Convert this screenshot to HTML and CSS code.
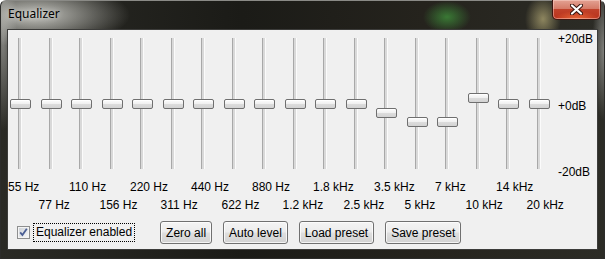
FILE: index.html
```html
<!DOCTYPE html>
<html>
<head>
    <title>Equalizer</title>
    <link rel="stylesheet" href="styles.css">
</head>
<body>
    <div class="window">
        <!-- Title bar -->
        <div class="titlebar">
            <span class="title">Equalizer</span>
            <button class="close-btn" title="Close">
                <svg width="13" height="11" viewBox="0 0 13 11">
                    <path d="M2 1.5 L11 9.5 M11 1.5 L2 9.5" stroke="#3a1610" stroke-width="4.2" stroke-linecap="round" fill="none"/>
                    <path d="M2 1.5 L11 9.5 M11 1.5 L2 9.5" stroke="#ffffff" stroke-width="2.2" stroke-linecap="round" fill="none"/>
                </svg>
            </button>
        </div>

        <div class="client">
            <!-- Band sliders; thumb top = 61 - 3 * gain(dB) -->
            <div class="bands">
                <div class="sliders">
                    <div class="slider"><div class="track"></div><div class="thumb" style="top: 61px"></div></div>
                    <div class="slider"><div class="track"></div><div class="thumb" style="top: 61px"></div></div>
                    <div class="slider"><div class="track"></div><div class="thumb" style="top: 61px"></div></div>
                    <div class="slider"><div class="track"></div><div class="thumb" style="top: 61px"></div></div>
                    <div class="slider"><div class="track"></div><div class="thumb" style="top: 61px"></div></div>
                    <div class="slider"><div class="track"></div><div class="thumb" style="top: 61px"></div></div>
                    <div class="slider"><div class="track"></div><div class="thumb" style="top: 61px"></div></div>
                    <div class="slider"><div class="track"></div><div class="thumb" style="top: 61px"></div></div>
                    <div class="slider"><div class="track"></div><div class="thumb" style="top: 61px"></div></div>
                    <div class="slider"><div class="track"></div><div class="thumb" style="top: 61px"></div></div>
                    <div class="slider"><div class="track"></div><div class="thumb" style="top: 61px"></div></div>
                    <div class="slider"><div class="track"></div><div class="thumb" style="top: 61px"></div></div>
                    <div class="slider"><div class="track"></div><div class="thumb" style="top: 70px"></div></div>
                    <div class="slider"><div class="track"></div><div class="thumb" style="top: 79px"></div></div>
                    <div class="slider"><div class="track"></div><div class="thumb" style="top: 79px"></div></div>
                    <div class="slider"><div class="track"></div><div class="thumb" style="top: 55px"></div></div>
                    <div class="slider"><div class="track"></div><div class="thumb" style="top: 61px"></div></div>
                    <div class="slider"><div class="track"></div><div class="thumb" style="top: 61px"></div></div>
                </div>
                <div class="scale">
                    <span>+20dB</span>
                    <span>+0dB</span>
                    <span>-20dB</span>
                </div>
            </div>

            <!-- Frequency labels, staggered over two rows -->
            <div class="freqs">
                <div class="freq-row">
                    <span>55 Hz</span>
                    <span>110 Hz</span>
                    <span>220 Hz</span>
                    <span>440 Hz</span>
                    <span>880 Hz</span>
                    <span>1.8 kHz</span>
                    <span>3.5 kHz</span>
                    <span>7 kHz</span>
                    <span>14 kHz</span>
                </div>
                <div class="freq-row shifted">
                    <span>77 Hz</span>
                    <span>156 Hz</span>
                    <span>311 Hz</span>
                    <span>622 Hz</span>
                    <span>1.2 kHz</span>
                    <span>2.5 kHz</span>
                    <span>5 kHz</span>
                    <span>10 kHz</span>
                    <span>20 kHz</span>
                </div>
            </div>

            <!-- Bottom controls -->
            <div class="controls">
                <label class="check">
                    <svg class="check-box" width="13" height="13" viewBox="0 0 13 13">
                        <defs>
                            <linearGradient id="cbfill" x1="0" y1="0" x2="1" y2="1">
                                <stop offset="0" stop-color="#cfd3d8"/>
                                <stop offset="1" stop-color="#f6f7f8"/>
                            </linearGradient>
                        </defs>
                        <rect x="0.5" y="0.5" width="12" height="12" fill="#f4f4f4" stroke="#8e8f8f"/>
                        <rect x="2" y="2" width="9" height="9" fill="url(#cbfill)"/>
                        <path d="M3.2 6.4 L5.4 9 L9.8 2.8" stroke="#4a5e94" stroke-width="1.8" fill="none"/>
                    </svg>
                    <span class="check-label">Equalizer enabled</span>
                </label>
                <div class="buttons">
                    <button class="btn">Zero all</button>
                    <button class="btn">Auto level</button>
                    <button class="btn">Load preset</button>
                    <button class="btn">Save preset</button>
                </div>
            </div>
        </div>
    </div>
</body>
</html>
```

FILE: styles.css
```css
body {
    margin: 0;
    width: 605px;
    height: 259px;
    overflow: hidden;
    font-family: "Liberation Sans", Arial, sans-serif;
    font-size: 12px;
    color: #000;
}
.window {
    width: 605px;
    height: 259px;
    box-sizing: border-box;
    display: flex;
    flex-direction: column;
    border-radius: 6px 6px 0 0;
    border: 1px solid #2c2c2a;
    border-top-color: #8a8a86;
    background:
        radial-gradient(ellipse 95px 32px at 34px 14px, rgba(206,206,200,0.95), rgba(206,206,200,0) 100%),
        radial-gradient(ellipse 14px 90px at 2px 40px, rgba(150,150,146,0.8), rgba(150,150,146,0) 100%),
        radial-gradient(ellipse 24px 16px at 446px 16px, rgba(60,130,55,0.9), rgba(60,130,55,0) 100%),
        radial-gradient(ellipse 18px 24px at 542px 18px, rgba(175,165,115,0.75), rgba(175,165,115,0) 100%),
        radial-gradient(ellipse 12px 70px at 603px 50px, rgba(150,150,146,0.8), rgba(150,150,146,0) 100%),
        linear-gradient(90deg, #2a2a25 0%, #1b1b17 40%, #25231d 70%, #2c2c26 100%);
}
.titlebar {
    height: 28px;
    display: flex;
    align-items: flex-start;
    padding: 0 3px 0 7px;
}
.title {
    margin-top: 5px;
    font-family: "Noto Sans", "Open Sans", sans-serif;
    font-size: 12px;
    line-height: 16px;
    color: #000;
    text-shadow: 0 0 6px rgba(255,255,255,0.6);
}
.close-btn {
    margin-left: auto;
    margin-top: -1px;
    width: 49px;
    height: 20px;
    padding: 0;
    display: flex;
    align-items: center;
    justify-content: center;
    border: 1px solid #3e1510;
    border-top: none;
    border-radius: 0 0 5px 5px;
    background:
        radial-gradient(ellipse 22px 8px at 50% 100%, rgba(240,110,60,0.9), rgba(240,110,60,0) 100%),
        linear-gradient(#e3a293 0%, #d57b68 45%, #c0412a 50%, #b9321c 100%);
    box-shadow: inset 0 0 0 1px rgba(255,220,210,0.45);
}
.client {
    flex: 1;
    margin: 0 6px 8px 6px;
    border: 1px solid #3c3c3a;
    background: #f0f0f0;
    display: flex;
    flex-direction: column;
}
.bands {
    height: 150px;
    display: flex;
}
.sliders {
    display: grid;
    grid-template-columns: repeat(18, 30.5px);
    padding-top: 8px;
}
.slider {
    position: relative;
    height: 131px;
}
.track {
    margin-left: 10px;
    width: 2px;
    height: 100%;
    background: #d9d9d9;
    border-left: 1px solid #a8a8a8;
    border-right: 1px solid #fbfbfb;
}
.thumb {
    position: absolute;
    left: 2px;
    width: 21px;
    height: 10px;
    box-sizing: border-box;
    border: 1px solid #6f6f6f;
    border-radius: 2px;
    background: linear-gradient(#fdfdfd 0%, #f1f1f1 45%, #dcdcdc 55%, #d3d3d3 100%);
    box-shadow: inset 0 1px 0 #fff;
}
.scale {
    margin-left: 1px;
    padding-top: 2px;
    height: 147px;
    display: flex;
    flex-direction: column;
    justify-content: space-between;
    line-height: 14px;
}
.freqs {
    display: flex;
    flex-direction: column;
    gap: 4px;
    line-height: 14px;
}
.freq-row {
    display: flex;
    white-space: nowrap;
}
.freq-row span {
    width: 61px;
    flex: none;
}
.freq-row.shifted {
    padding-left: 30.5px;
}
.controls {
    margin-top: 9px;
    height: 23px;
    display: flex;
    align-items: center;
    padding-left: 9px;
}
.check {
    display: flex;
    align-items: center;
    gap: 3px;
}
.check-box {
    display: block;
}
.check-label {
    padding: 1px 2px 2px 2px;
    border: 1px dotted #000;
    line-height: 14px;
}
.buttons {
    display: flex;
    gap: 11px;
    margin-left: 25px;
}
.btn {
    height: 23px;
    padding: 0 5px;
    border: 1px solid #707070;
    border-radius: 3px;
    background: linear-gradient(#f4f4f4 0%, #ececec 48%, #dfdfdf 52%, #d2d2d2 100%);
    box-shadow: inset 0 0 0 1px rgba(255,255,255,0.75);
    font-family: "Liberation Sans", Arial, sans-serif;
    font-size: 12px;
    color: #000;
}
```
